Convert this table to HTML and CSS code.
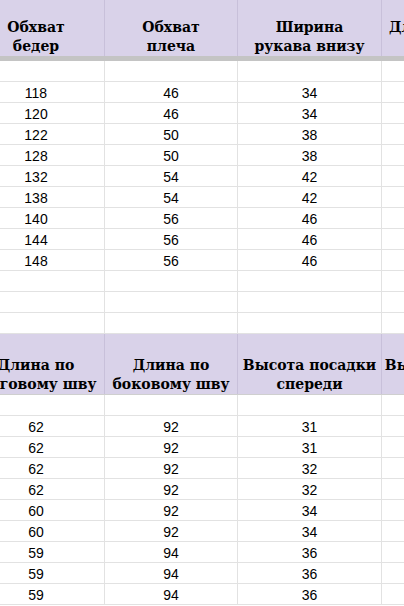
FILE: index.html
```html
<!DOCTYPE html>
<html lang="ru">
<head>
<meta charset="utf-8">
<title>Таблица размеров</title>
<link rel="stylesheet" href="styles.css">
</head>
<body>
<div class="sheet">
  <div class="row head head1">
    <div class="cell"><span class="ln">Обхват</span><span class="ln">бедер</span></div>
    <div class="cell"><span class="ln">Обхват</span><span class="ln">плеча</span></div>
    <div class="cell"><span class="ln">Ширина</span><span class="ln">рукава внизу</span></div>
    <div class="cell"><span class="ln">Длина изделия</span><span class="ln">по спинке</span></div>
  </div>
  <div class="frozen"></div>
  <div class="row"><div class="cell"></div><div class="cell"></div><div class="cell"></div><div class="cell"></div></div>
  <div class="row"><div class="cell">118</div><div class="cell">46</div><div class="cell">34</div><div class="cell"></div></div>
  <div class="row"><div class="cell">120</div><div class="cell">46</div><div class="cell">34</div><div class="cell"></div></div>
  <div class="row"><div class="cell">122</div><div class="cell">50</div><div class="cell">38</div><div class="cell"></div></div>
  <div class="row"><div class="cell">128</div><div class="cell">50</div><div class="cell">38</div><div class="cell"></div></div>
  <div class="row"><div class="cell">132</div><div class="cell">54</div><div class="cell">42</div><div class="cell"></div></div>
  <div class="row"><div class="cell">138</div><div class="cell">54</div><div class="cell">42</div><div class="cell"></div></div>
  <div class="row"><div class="cell">140</div><div class="cell">56</div><div class="cell">46</div><div class="cell"></div></div>
  <div class="row"><div class="cell">144</div><div class="cell">56</div><div class="cell">46</div><div class="cell"></div></div>
  <div class="row"><div class="cell">148</div><div class="cell">56</div><div class="cell">46</div><div class="cell"></div></div>
  <div class="row"><div class="cell"></div><div class="cell"></div><div class="cell"></div><div class="cell"></div></div>
  <div class="row"><div class="cell"></div><div class="cell"></div><div class="cell"></div><div class="cell"></div></div>
  <div class="row"><div class="cell"></div><div class="cell"></div><div class="cell"></div><div class="cell"></div></div>
  <div class="row head head2">
    <div class="cell"><span class="ln">Длина по</span><span class="ln">шаговому шву</span></div>
    <div class="cell"><span class="ln">Длина по</span><span class="ln">боковому шву</span></div>
    <div class="cell"><span class="ln">Высота посадки</span><span class="ln">спереди</span></div>
    <div class="cell"><span class="ln">Высота посадки</span><span class="ln">сзади</span></div>
  </div>
  <div class="row"><div class="cell"></div><div class="cell"></div><div class="cell"></div><div class="cell"></div></div>
  <div class="row"><div class="cell">62</div><div class="cell">92</div><div class="cell">31</div><div class="cell"></div></div>
  <div class="row"><div class="cell">62</div><div class="cell">92</div><div class="cell">31</div><div class="cell"></div></div>
  <div class="row"><div class="cell">62</div><div class="cell">92</div><div class="cell">32</div><div class="cell"></div></div>
  <div class="row"><div class="cell">62</div><div class="cell">92</div><div class="cell">32</div><div class="cell"></div></div>
  <div class="row"><div class="cell">60</div><div class="cell">92</div><div class="cell">34</div><div class="cell"></div></div>
  <div class="row"><div class="cell">60</div><div class="cell">92</div><div class="cell">34</div><div class="cell"></div></div>
  <div class="row"><div class="cell">59</div><div class="cell">94</div><div class="cell">36</div><div class="cell"></div></div>
  <div class="row"><div class="cell">59</div><div class="cell">94</div><div class="cell">36</div><div class="cell"></div></div>
  <div class="row"><div class="cell">59</div><div class="cell">94</div><div class="cell">36</div><div class="cell"></div></div>
</div>
</body>
</html>
```
FILE: styles.css
```css
html, body {
  margin: 0;
  padding: 0;
  background: #ffffff;
  overflow: hidden;
}
.sheet {
  width: 600px;
  margin-left: -32px;
  font-family: "Liberation Sans", Arial, sans-serif;
  font-size: 14px;
  color: #000000;
}
.row {
  display: grid;
  grid-template-columns: 137px 133px 144px 140px;
  height: 21px;
  box-sizing: border-box;
  border-bottom: 1px solid #e2e2e2;
}
.cell {
  box-sizing: border-box;
  border-right: 1px solid #e2e2e2;
  display: flex;
  align-items: flex-end;
  justify-content: center;
  text-align: center;
  padding: 0 3px 0;
  line-height: 17px;
  white-space: nowrap;
}
.head {
  background: #d9d2e9;
  font-family: "DejaVu Serif", "Liberation Serif", serif;
  font-weight: bold;
  font-size: 14px;
}
.head .cell {
  flex-direction: column;
  justify-content: flex-end;
  align-items: center;
  line-height: 19px;
  padding: 0 0 0;
  border-right-color: #c8c0da;
}
.ln {
  display: block;
  white-space: nowrap;
}
.head1 {
  height: 56px;
  border-bottom: none;
}
.head2 {
  height: 61px;
  border-bottom: 1px solid #cfcfcf;
}
.frozen {
  height: 5px;
  background: #c4c4c4;
}
```
